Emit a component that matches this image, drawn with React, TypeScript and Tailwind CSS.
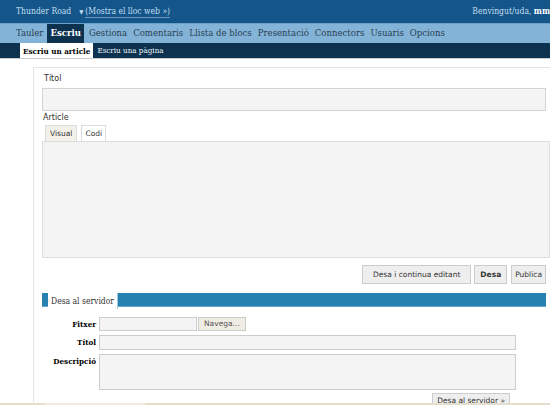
const serif = { fontFamily: '"DejaVu Serif Condensed", "DejaVu Serif", "Liberation Serif", serif' };

function Btn({ children, className }: { children: React.ReactNode; className?: string }) {
  return (
    <button className={"h-[19px] border border-[#ccc] bg-[#eeeeee] text-[7.5px] text-[#333] " + (className ?? "")}>
      {children}
    </button>
  );
}

export default function App() {
  const nav = ["Gestiona", "Comentaris", "Llista de blocs", "Presentació", "Connectors", "Usuaris", "Opcions"];
  return (
    <div
      className="relative h-[405px] w-[550px] overflow-hidden bg-white text-[#333]"
      style={{ fontFamily: '"DejaVu Sans", Verdana, sans-serif' }}
    >
      {/* top bar */}
      <div className="flex h-[23px] items-center justify-between bg-[#14568a] pl-4 text-[8.5px]" style={serif}>
        <div className="flex items-center text-[#c3def1]">
          <span>Thunder Road</span>
          <span className="ml-[8px] text-[6px]">▼</span>
          <span className="ml-[2px] border-b border-[#6e96b6] leading-[11px]">(Mostra el lloc web »)</span>
        </div>
        <div className="text-[#c3def1]">
          Benvingut/uda, <span className="font-bold text-white">mm</span>
        </div>
      </div>

      {/* main nav */}
      <div className="flex h-[20px] items-stretch border-t border-[#6a9fc8] bg-[#83b4d8] pl-[14px] text-[9.5px] text-[#2a3f52]" style={serif}>
        <span className="flex items-center px-[2px]">Tauler</span>
        <span className="mx-[2px] flex items-center bg-[#0d324f] px-[3px] font-bold text-white">Escriu</span>
        {nav.map((n) => (
          <span key={n} className="flex items-center px-[3px]">
            {n}
          </span>
        ))}
      </div>

      {/* sub nav */}
      <div className="flex h-[15px] items-end bg-[#0d324f] pl-[20px] text-[8px]" style={serif}>
        <span className="flex h-[15px] items-center bg-white px-[3px] font-bold text-black">Escriu un article</span>
        <span className="flex h-[15px] items-center px-[4px] text-[#eaf3fa]">Escriu una pàgina</span>
      </div>
      <div className="h-px bg-[#c9c9c9]" />

      {/* content */}
      <div className="ml-[33px] mt-[8px] border-l border-t border-[#e4e4e4] pl-[8px] pt-[5px]">
        <div className="pl-[2px] text-[8px] leading-[12px]">Títol</div>
        <div className="mr-[4px] mt-[3px] h-[23px] border border-[#d3d3d3] bg-[#f4f4f4]" />
        <div className="mt-[1px] pl-[1px] text-[8px] leading-[12px]">Article</div>
        <div className="mt-[1px] flex gap-[4px] pl-[3px]">
          <span className="flex h-[16px] items-center border border-b-0 border-[#ddd] bg-[#f4f1ea] px-[4px] text-[7.5px]">Visual</span>
          <span className="flex h-[16px] items-center border border-b-0 border-[#ddd] bg-white px-[3px] text-[7.5px]">Codi</span>
        </div>
        <div className="h-[117px] border border-[#ddd] bg-[#f4f4f4]" />

        <div className="mr-[4px] mt-[7px] flex justify-end">
          <Btn className="px-[10px]">Desa i continua editant</Btn>
          <Btn className="ml-[3px] px-[5px] font-bold">Desa</Btn>
          <Btn className="ml-[4px] px-[3px]">Publica</Btn>
        </div>

        {/* upload */}
        <div className="mr-[4px] mt-[9px] flex h-[14px] items-end border-b border-[#6aa8d2] bg-[#2680b0] pl-[6px]">
          <span className="flex h-[16px] items-center self-start border-r border-[#9cc6e2] bg-white px-[3px] text-[8.5px]" style={serif}>
            Desa al servidor
          </span>
        </div>

        <div className="mt-[10px] grid grid-cols-[56px_1fr] gap-x-[1px] gap-y-[4px] pr-[34px] text-[8px]" style={serif}>
          <div className="pr-[2px] text-right font-bold leading-[14px] text-black">Fitxer</div>
          <div className="flex items-center gap-[1px]">
            <div className="h-[14px] w-[98px] border border-[#ccc] bg-[#f4f4f4]" />
            <button className="h-[14px] border border-[#ccc] bg-[#f0ede5] px-[5px] text-[7.5px] text-[#555]" style={{ fontFamily: '"DejaVu Sans", sans-serif' }}>
              Navega...
            </button>
          </div>
          <div className="pr-[2px] text-right font-bold leading-[14px] text-black">Títol</div>
          <div className="h-[15px] border border-[#ccc] bg-[#f4f4f4]" />
          <div className="pr-[2px] text-right font-bold leading-[14px] text-black">Descripció</div>
          <div className="h-[36px] border border-[#ccc] bg-[#f4f4f4]" />
        </div>
        <div className="mr-[40px] mt-[3px] flex justify-end">
          <button className="h-[16px] border border-[#ccc] bg-[#eeeeee] px-[4px] text-[7.5px] leading-[14px] text-[#333]">
            Desa al servidor »
          </button>
        </div>
      </div>

      <div className="absolute bottom-0 left-0 h-[2px] w-full bg-[#e4dfcc]">
        <div className="ml-[45px] h-full w-[100px] bg-[#efeadb]" />
      </div>
    </div>
  );
}
